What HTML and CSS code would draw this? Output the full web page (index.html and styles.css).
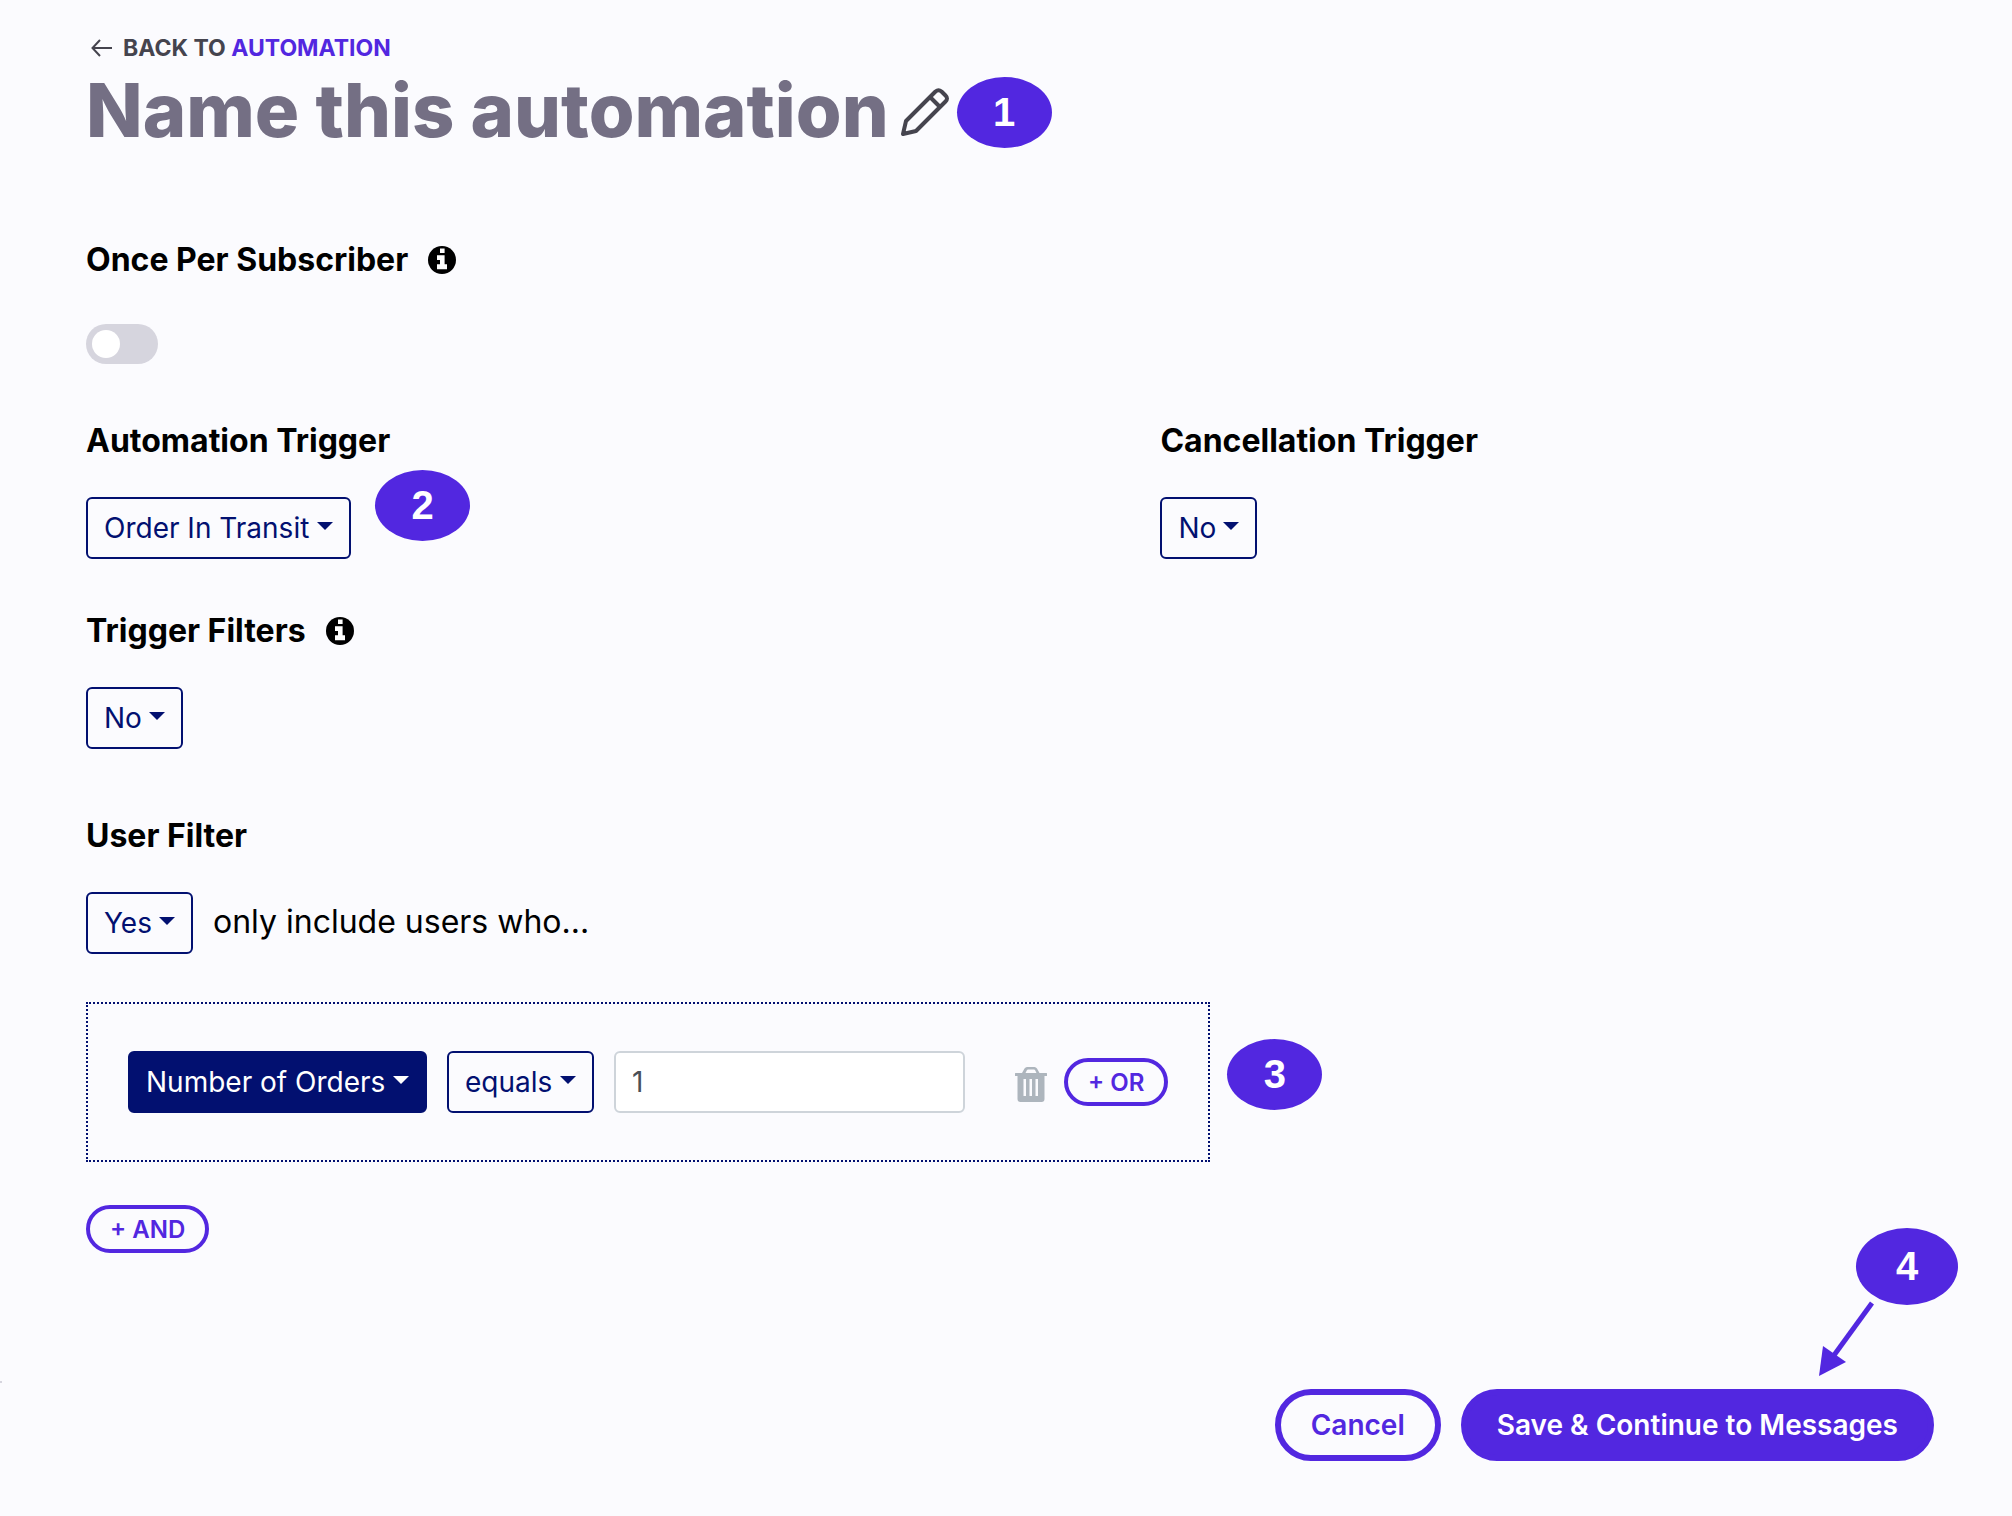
FILE: index.html
```html
<!DOCTYPE html>
<html lang="en">
<head>
  <meta charset="UTF-8" />
  <meta name="viewport" content="width=device-width, initial-scale=1.0" />
  <title>Name this automation</title>
  <link rel="stylesheet" href="styles.css">
</head>
<body>

  <main class="page">

    <header class="page-header">
      <nav class="back">
        <svg class="back-arrow" viewBox="0 0 22 18" aria-hidden="true">
          <path d="M21 9H1.500M9 1L1.500 9L9 17" />
        </svg>
        <span>Back to <a href="#">Automation</a></span>
      </nav>
      <div class="title-row">
        <h1>Name this automation</h1>
        <button class="icon-btn" type="button" aria-label="Edit name">
          <svg class="pencil" viewBox="0 0 48 48" aria-hidden="true">
            <path d="M2 46L5 33L34.500 3.500Q37.500 1 40.500 3.500L44.500 7.500Q47.500 10.500 44.500 13.500L15 43Z" />
            <path d="M29.500 9.500L38.500 18.500" />
          </svg>
        </button>
        <span class="badge">1</span>
      </div>
    </header>

    <section class="once">
      <h2>
        <label for="once">Once Per Subscriber</label>
        <svg class="info" viewBox="0 0 28 28" aria-hidden="true">
          <circle cx="14" cy="14" r="14" />
          <path d="M12 2.500h4.600v4.500H12zM9 9.200h7.600v9.100H19v5H9v-5h3V14H9z" />
        </svg>
      </h2>
      <input class="toggle" type="checkbox" id="once">
    </section>

    <div class="triggers">
      <section>
        <h2><label for="trigger">Automation Trigger</label></h2>
        <div class="select">
          <select id="trigger">
            <option>Order In Transit</option>
          </select>
          <span class="badge badge-trigger">2</span>
        </div>
      </section>
      <section>
        <h2><label for="cancellation">Cancellation Trigger</label></h2>
        <div class="select">
          <select id="cancellation">
            <option>No</option>
          </select>
        </div>
      </section>
    </div>

    <section class="trigger-filters">
      <h2>
        <label for="filters">Trigger Filters</label>
        <svg class="info" viewBox="0 0 28 28" aria-hidden="true">
          <circle cx="14" cy="14" r="14" />
          <path d="M12 2.500h4.600v4.500H12zM9 9.200h7.600v9.100H19v5H9v-5h3V14H9z" />
        </svg>
      </h2>
      <div class="select">
        <select id="filters">
          <option>No</option>
        </select>
      </div>
    </section>

    <section class="user-filter">
      <h2><label for="user-filter">User Filter</label></h2>
      <div class="filter-toggle">
        <div class="select">
          <select id="user-filter">
            <option>Yes</option>
          </select>
        </div>
        <span class="hint">only include users who...</span>
      </div>

      <div class="rule">
        <div class="select select-solid">
          <select aria-label="Property">
            <option>Number of Orders</option>
          </select>
        </div>
        <div class="select">
          <select aria-label="Operator">
            <option>equals</option>
          </select>
        </div>
        <input class="value" type="text" value="1" aria-label="Value">
        <div class="rule-actions">
          <button class="icon-btn" type="button" aria-label="Delete">
            <svg class="trash" viewBox="0 0 32 35" aria-hidden="true">
              <path fill-rule="evenodd" d="M0 6.500Q0 6 .5 6H7L9.500 1.500Q10.500 0 12 0h7.500Q21 0 22 1.500L24.500 6h7Q32 6 32 6.500V8.500Q32 9 31.500 9H29.500V32Q29.500 35 26.500 35H5.500Q2.500 35 2.500 32V9H.5Q0 9 0 8.500ZM10.500 6H21.500L20 3Q19.800 2.500 19 2.500H13Q12.200 2.500 12 3ZM8.500 12V29H11V12ZM14.500 12V29H17V12ZM20.500 12V29H23V12Z" />
            </svg>
          </button>
          <button class="btn btn-small" type="button">+ OR</button>
        </div>
        <span class="badge badge-rule">3</span>
      </div>

      <button class="btn btn-small" type="button">+ AND</button>
    </section>

    <footer class="actions">
      <button class="btn" type="button">Cancel</button>
      <button class="btn btn-primary" type="submit">Save &amp; Continue to Messages</button>
      <div class="callout">
        <span class="badge badge-large">4</span>
        <svg class="callout-arrow" viewBox="0 0 56 76" aria-hidden="true">
          <path class="line" d="M53 2L13 57" />
          <path d="M0 75L4 45L27 61Z" />
        </svg>
      </div>
    </footer>

  </main>

</body>
</html>
```

FILE: styles.css
```css
* {
  margin: 0;
  padding: 0;
  box-sizing: border-box;
}

:root {
  --purple: #5227e0;
  --navy: #021070;
  --dark: #45444e;
}

body {
  background: #fbfbfe;
  color: #000;
  font-family: Inter, "Liberation Sans", sans-serif;
  font-size: 28px;
}

button,
input,
select {
  font: inherit;
}

.page {
  padding: 36px 78px 54px 86px;
}

/* Header */
.back {
  display: flex;
  align-items: center;
  gap: 10px;
  padding-left: 5px;
  color: var(--dark);
  font-size: 23px;
  font-weight: 700;
  line-height: 24px;
  text-transform: uppercase;
}

.back a {
  color: var(--purple);
  text-decoration: none;
}

.back-arrow {
  width: 22px;
  height: 18px;
  fill: none;
  stroke: var(--dark);
  stroke-width: 2;
}

.title-row {
  display: flex;
  align-items: center;
  gap: 8px;
  margin-top: 10px;
}

h1 {
  margin-right: 4px;
  color: #746f84;
  font-size: 74px;
  font-weight: 800;
  line-height: 80px;
}

.icon-btn {
  display: flex;
  padding-top: 4px;
  border: 0;
  background: none;
  cursor: pointer;
}

.pencil {
  width: 48px;
  height: 48px;
  fill: none;
  stroke: var(--dark);
  stroke-width: 4;
  stroke-linejoin: round;
}

/* Numbered badges */
.badge {
  display: flex;
  align-items: center;
  justify-content: center;
  width: 95px;
  height: 71px;
  border-radius: 50%;
  background: var(--purple);
  color: #fff;
  font-family: "Liberation Sans", Arial, sans-serif;
  font-size: 40px;
  font-weight: 700;
}

.title-row .badge {
  margin-top: 4px;
}

.badge-trigger {
  position: absolute;
  top: -27px;
  left: calc(100% + 24px);
}

.badge-rule {
  position: absolute;
  top: 35px;
  left: calc(100% + 19px);
}

.badge-large {
  width: 102px;
  height: 77px;
}

/* Sections */
h2 {
  display: flex;
  align-items: center;
  gap: 20px;
  margin-bottom: 36px;
  font-size: 32px;
  font-weight: 700;
  line-height: 40px;
}

.info {
  width: 28px;
  height: 28px;
}

.info path {
  fill: #fff;
}

.once {
  margin-top: 90px;
}

.once h2 {
  margin-bottom: 44px;
}

.toggle {
  display: block;
  appearance: none;
  width: 72px;
  height: 40px;
  padding: 6px;
  border-radius: 20px;
  background: #d6d5de;
  cursor: pointer;
}

.toggle::before {
  content: "";
  display: block;
  width: 28px;
  height: 28px;
  border-radius: 50%;
  background: #fff;
}

.toggle:checked {
  background: var(--purple);
}

.toggle:checked::before {
  margin-left: auto;
}

.triggers {
  display: grid;
  grid-template-columns: 25fr 18fr;
  margin-top: 57px;
}

.trigger-filters {
  margin-top: 52px;
}

.user-filter {
  margin-top: 67px;
}

/* Drop-downs */
.select {
  position: relative;
  width: fit-content;
  color: var(--navy);
}

.select select {
  display: block;
  appearance: none;
  height: 62px;
  padding: 0 39px 0 16px;
  border: 2px solid var(--navy);
  border-radius: 6px;
  background: transparent;
  color: inherit;
  cursor: pointer;
}

.select::after {
  content: "";
  position: absolute;
  top: 25px;
  right: 18px;
  border: 8px solid transparent;
  border-top-color: currentColor;
  border-bottom: 0;
  pointer-events: none;
}

.select-solid {
  color: #fff;
}

.select-solid select {
  background: var(--navy);
}

/* User filter */
.filter-toggle {
  display: flex;
  align-items: baseline;
  gap: 20px;
}

.hint {
  font-size: 32px;
  line-height: 40px;
}

.rule {
  position: relative;
  display: flex;
  align-items: center;
  gap: 20px;
  width: fit-content;
  margin: 48px 0 43px;
  padding: 47px 40px;
  border: 2px dotted var(--navy);
}

.value {
  width: 351px;
  height: 62px;
  padding: 0 16px;
  border: 2px solid #ced4da;
  border-radius: 6px;
  background: #fff;
  color: #495057;
}

.rule-actions {
  display: flex;
  align-items: center;
  gap: 17px;
  margin-left: 30px;
}

.trash {
  width: 32px;
  height: 35px;
  fill: #adb5bd;
}

/* Buttons */
.btn {
  height: 72px;
  padding: 0 30px;
  border: 6px solid var(--purple);
  border-radius: 36px;
  background: transparent;
  color: var(--purple);
  font-weight: 600;
  cursor: pointer;
}

.btn-primary {
  background: var(--purple);
  color: #fff;
}

.btn-small {
  height: 48px;
  padding: 0 20px;
  border-width: 4px;
  border-radius: 24px;
  font-size: 24px;
}

/* Footer */
.actions {
  position: relative;
  display: flex;
  justify-content: flex-end;
  gap: 20px;
  margin-top: 136px;
}

/* End of the side divider */
.actions::before {
  content: "";
  position: absolute;
  top: -8px;
  left: -86px;
  width: 2px;
  height: 2px;
  background: #d6d5de;
}

.callout {
  position: absolute;
  right: -24px;
  bottom: 156px;
}

.callout-arrow {
  position: absolute;
  top: 73px;
  right: 83px;
  width: 56px;
  height: 76px;
  fill: var(--purple);
}

.callout-arrow .line {
  stroke: var(--purple);
  stroke-width: 5;
}
```
